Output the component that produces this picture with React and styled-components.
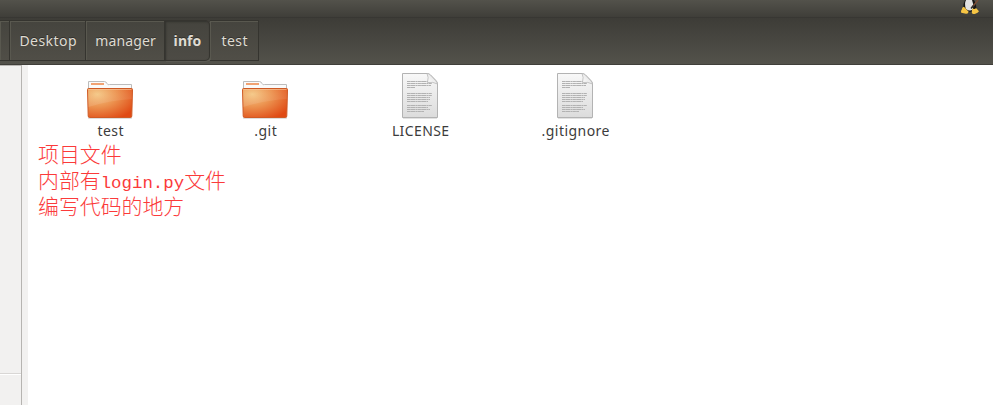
import React from "react";
import styled, { createGlobalStyle } from "styled-components";

const Global = createGlobalStyle`
  * { box-sizing: border-box; }
  html, body { margin: 0; overflow: hidden; background: #fff; }
`;
const Window = styled.div`
  width: 993px;
  height: 405px;
  display: flex;
  flex-direction: column;
  overflow: hidden;
  font-family: "Noto Sans", "Open Sans", sans-serif;
`;
const TopBar = styled.header`
  height: 18px;
  flex: none;
  display: flex;
  justify-content: flex-end;
  padding-right: 13px;
  background: linear-gradient(#53524b, #3f3e39 17px);
  border-bottom: 1px solid #383733;
`;
const PathBar = styled.nav`
  height: 47px;
  flex: none;
  display: flex;
  align-items: flex-start;
  padding-top: 2px;
  background: linear-gradient(#3d3c37, #53524b);
  border-bottom: 1px solid #403f3a;
`;
const Crumb = styled.div`
  width: ${(p) => p.$w}px;
  height: 41px;
  flex: none;
  display: flex;
  justify-content: center;
  align-items: center;
  padding: 1px 0 0 1px;
  color: #dfdbd2;
  font-size: 14px;
  line-height: 20px;
  font-weight: ${(p) => (p.$active ? 700 : 400)};
  text-shadow: 0 -1px #32312d;
  border: 1px solid #35342f;
  border-left: 0;
  border-radius: ${(p) => (p.$active ? "0 5px 5px 0" : "0")};
  background: ${(p) => (p.$active ? "linear-gradient(#45443e, #4d4b45)" : "linear-gradient(#45443e, #504e47)")};
  box-shadow: ${(p) => (p.$active ? "inset 1px 1px 2px #32312d, 1px 1px #5b5a53" : "inset 1px 1px #59584f")};
`;
const Label = styled.span`
  letter-spacing: ${(p) => p.$spacing || 0}px;
  margin-right: ${(p) => -(p.$spacing || 0)}px;
  white-space: nowrap;
`;
const Body = styled.main`
  flex: 1;
  display: flex;
  min-height: 0;
`;
const Sidebar = styled.aside`
  width: 22px;
  flex: none;
  background: #f2f1f0;
  border-right: 1px solid #b6b4b1;
  border-top: 1px solid #bab8b5;
`;
const SidebarRule = styled.div`
  margin-top: 307px;
  height: 2px;
  background: #fff;
  border-top: 1px solid #d9d7d5;
`;
const Gutter = styled.div`
  width: 6px;
  flex: none;
  background: #f2f1f0;
`;
const Content = styled.section`
  flex: 1;
  padding: 4px 0 0 5px;
`;
const Files = styled.div`
  display: grid;
  grid-template-columns: repeat(4, 155px);
`;
const File = styled.div`
  height: 75px;
  display: flex;
  flex-direction: column;
  align-items: center;
  color: #3c3c3c;
  font-size: 14px;
  line-height: 20px;
`;
const Icon = styled.svg`
  display: block;
  width: 48px;
  height: 52px;
  flex: none;
  margin-right: 1px;
`;
const Penguin = styled.svg`
  display: block;
  width: 20px;
  height: 15px;
`;
const Notes = styled.div`
  padding-left: 5px;
  color: #fb3a3a;
  font-family: "Liberation Mono", "Noto Sans CJK SC", monospace;
  font-size: 20.9px;
  font-weight: 300;
  line-height: 26px;
  white-space: nowrap;
`;
const NoteLine = styled.div`
  height: 26px;
`;
const Latin = styled.span`
  font-size: 17.4px;
  line-height: 1;
`;

const FolderIcon = () => (
  <Icon viewBox="0 0 48 52">
    <defs>
      <radialGradient id="folder" cx="0.22" cy="0.2" r="0.95">
        <stop offset="0" stopColor="#f4c785" />
        <stop offset="0.45" stopColor="#ec9350" />
        <stop offset="1" stopColor="#e04a14" />
      </radialGradient>
      <linearGradient id="shine" x1="0" y1="0" x2="0" y2="1">
        <stop offset="0" stopColor="#fff" stopOpacity="0.02" />
        <stop offset="1" stopColor="#fff" stopOpacity="0.12" />
      </linearGradient>
    </defs>
    <rect x="2" y="48" width="44" height="2" rx="1" fill="#ddd" />
    <path d="M2.5 22V12.5H18.5Q20 12.5 21 14.5T23.5 15.5H45.5V24H2.5Z" fill="#fafafa" stroke="#bcbcbc" />
    <rect x="5" y="14" width="13" height="2" fill="#f1a272" />
    <path d="M1.5 20.5Q1.5 19.5 2.5 19.5H45.5Q46.5 19.5 46.5 20.5L45.8 47Q45.7 48.5 44.5 48.5H3.5Q2.3 48.5 2.2 47Z" fill="url(#folder)" stroke="#cf5a25" />
    <path d="M2 20H46L45.8 30Q25 31 2.4 38Z" fill="url(#shine)" />
    <path d="M2.5 20.5H45.5" stroke="#f9c9a0" strokeOpacity=".6" />
  </Icon>
);

const TEXT_LINES = [
  [12.5, 25], [14.5, 25], [16.5, 24], [18.5, 8],
  [24.5, 25], [26.5, 25], [28.5, 23], [30.5, 23], [32.5, 21],
  [36.5, 25], [38.5, 21], [40.5, 23], [42.5, 17],
];
const DocumentIcon = () => (
  <Icon viewBox="0 0 48 52">
    <defs>
      <linearGradient id="paper" x1="0" y1="0" x2="0" y2="1">
        <stop offset="0" stopColor="#f8f8f8" />
        <stop offset="1" stopColor="#dcdcdc" />
      </linearGradient>
      <linearGradient id="fold" x1="0" y1="1" x2="1" y2="0">
        <stop offset="0" stopColor="#fff" />
        <stop offset="0.5" stopColor="#ededed" />
        <stop offset="1" stopColor="#aaa" />
      </linearGradient>
    </defs>
    <path d="M7 49.5H41" stroke="#e2e2e2" />
    <path d="M6.5 4.5H31Q33 4.5 34.5 6L40 11.5Q41.5 13 41.5 15V48.5H6.5Z" fill="url(#paper)" stroke="#b3b3b3" />
    {TEXT_LINES.map(([y, w]) => (
      <path key={y} d={`M11 ${y}h${w}`} stroke="#b2b2b2" strokeDasharray="3 .3 5 .3 2 .3" />
    ))}
    <path d="M31 4.5Q33 8 31.5 13.5Q37 12.5 41.5 15Q41 13 39.5 11.5L34.5 6Q33 4.5 31 4.5Z" fill="url(#fold)" stroke="#b7b7b7" strokeWidth=".8" />
  </Icon>
);

const PenguinIcon = () => (
  <Penguin viewBox="0 0 20 15">
    <path d="M5 0H14Q17 5 16 10L10 12L3 9Q3 4 5 0Z" fill="#171717" />
    <path d="M6 0H12Q14 4 13 9Q10 12 6 9Q4 4 6 0Z" fill="#e2e2e2" />
    <path d="M3.3 6.8Q5 7 6 9L8.5 11.5Q8.5 14 6 13.8L1.2 12.7Q.5 11 1.8 9.6Q2 8 3.3 6.8Z" fill="#f6c544" />
    <path d="M12.2 8.5Q15 9.5 16 8L19 11.2Q18 12.7 15.3 13.7Q12.3 14.7 11.8 12.5Z" fill="#f6c544" />
    <path d="M12 7.5L18 0" stroke="#7b4c35" strokeWidth="1.5" />
    <path d="M11 8.5L13.5 5.5" stroke="#2d2d2d" strokeWidth="1.5" />
  </Penguin>
);

const crumbs = [
  { w: 10 },
  { name: "Desktop", w: 76, spacing: 0.45 },
  { name: "manager", w: 79, spacing: 0.15 },
  { name: "info", w: 45, active: true, spacing: 0.1 },
  { name: "test", w: 49, spacing: 0.5 },
];
const files = [
  { name: "test", folder: true, spacing: 0.5 },
  { name: ".git", folder: true, spacing: 0.5 },
  { name: "LICENSE", spacing: 0.4 },
  { name: ".gitignore", spacing: 0.45 },
];

export default function App() {
  return (
    <Window>
      <Global />
      <TopBar><PenguinIcon /></TopBar>
      <PathBar>
        {crumbs.map((c) => (
          <Crumb key={c.w} $w={c.w} $active={c.active}>
            <Label $spacing={c.spacing}>{c.name}</Label>
          </Crumb>
        ))}
      </PathBar>
      <Body>
        <Sidebar><SidebarRule /></Sidebar>
        <Gutter />
        <Content>
          <Files>
            {files.map((f) => (
              <File key={f.name}>
                {f.folder ? <FolderIcon /> : <DocumentIcon />}
                <Label $spacing={f.spacing}>{f.name}</Label>
              </File>
            ))}
          </Files>
          <Notes>
            <NoteLine>项目文件</NoteLine>
            <NoteLine>内部有<Latin>login.py</Latin>文件</NoteLine>
            <NoteLine>编写代码的地方</NoteLine>
          </Notes>
        </Content>
      </Body>
    </Window>
  );
}
